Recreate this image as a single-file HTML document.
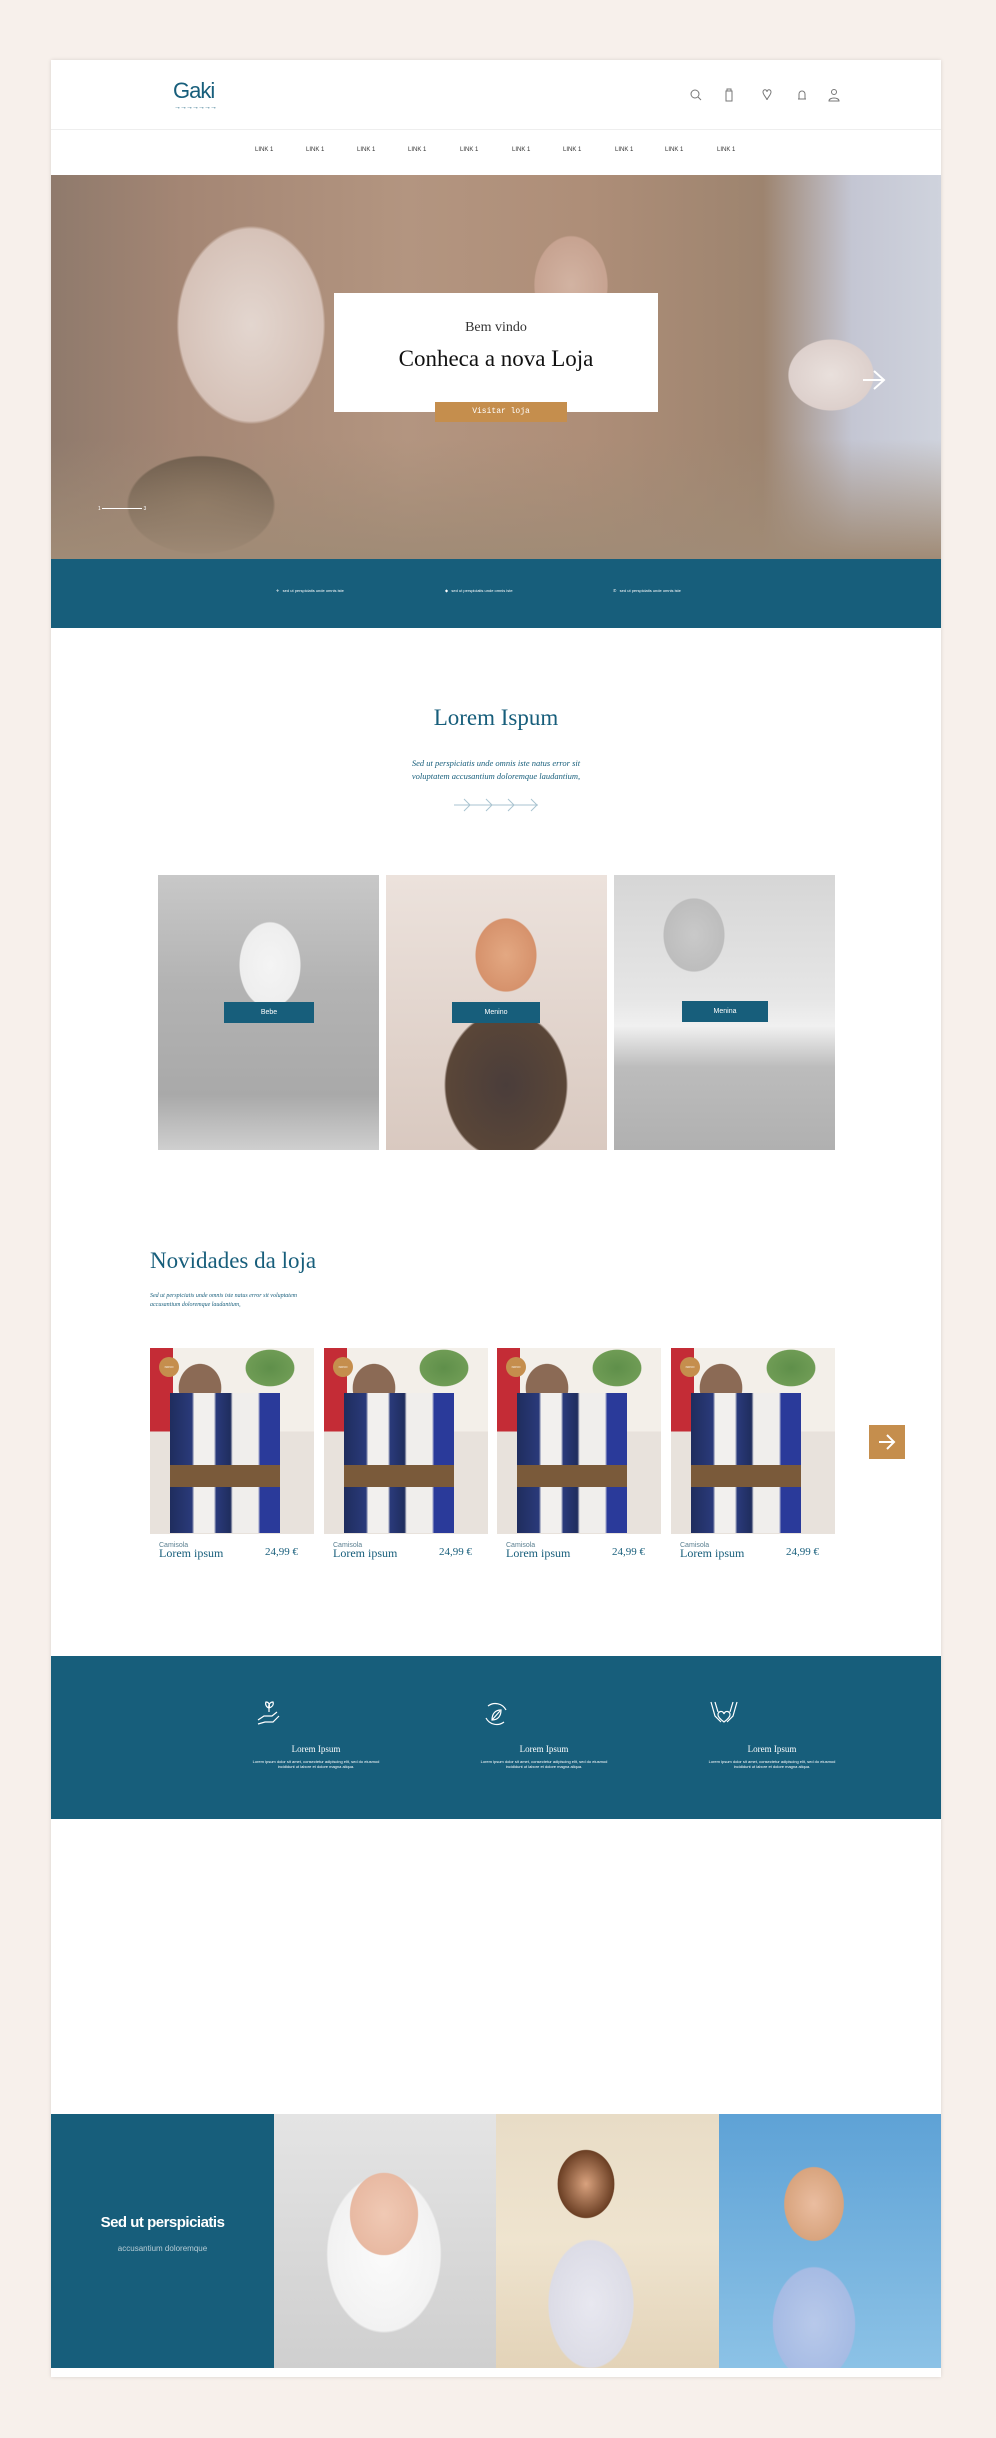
<!DOCTYPE html>
<html><head><meta charset="utf-8"><style>
*{margin:0;padding:0;box-sizing:border-box}
body{width:996px;height:2438px;background:#f7f0eb;font-family:"Liberation Sans",sans-serif;position:relative;overflow:hidden}
.card{position:absolute;left:51px;top:60px;width:890px;height:2317px;background:#fff;box-shadow:0 0 4px rgba(0,0,0,.12)}
.a{position:absolute}
.serif{font-family:"Liberation Serif",serif}
.blue{background:#175e7b}
.nav span{position:absolute;top:87px;font-size:6px;color:#333}
.hero{left:0;top:115px;width:890px;height:384px;background:
radial-gradient(ellipse 60px 80px at 520px 110px,#d2b3a2 0,#c7a391 60%,transparent 62%),
radial-gradient(ellipse 60px 50px at 780px 200px,#e9e0dc 0,#ddd0cc 70%,transparent 72%),
radial-gradient(ellipse 120px 160px at 200px 150px,#e3d6cf 0,#d6c2b8 60%,transparent 62%),
radial-gradient(ellipse 120px 80px at 150px 330px,#7e6a55 0,#6b5a4a 60%,transparent 62%),
linear-gradient(90deg,#8f7a6c 0,#a48674 15%,#b39580 40%,#ae8e78 60%,#9d846f 80%,#c4c6d3 90%,#cfd3dd 100%);}
.hero:after{content:"";position:absolute;left:0;right:0;bottom:0;height:120px;background:linear-gradient(180deg,transparent,#a08b76)}
.prod{position:absolute;top:1288px;width:164px;height:186px;background:
radial-gradient(ellipse 30px 34px at 50px 40px,#8b6a55 0,#8b6a55 70%,transparent 72%),
radial-gradient(ellipse 40px 30px at 120px 20px,#5f8f4a 0,#6f9c55 60%,transparent 62%),
linear-gradient(180deg,transparent 0,transparent 45%,#e8e2dc 45%),
linear-gradient(90deg,#c42c36 0,#c42c36 14%,#f3efe9 14%,#f3efe9 100%);}
.prod .k{position:absolute;left:20px;top:45px;width:110px;height:140px;background:linear-gradient(90deg,#1f2d5e 0,#2a3a7a 20%,#f2f0ee 22%,#f2f0ee 40%,#2a3a7a 42%,#1f2d5e 55%,#f0eeec 57%,#f0eeec 80%,#2a3a9a 82%)}
.prod .k:after{content:"";position:absolute;left:0;right:0;top:72px;height:22px;background:#7a5a3a}
.prod .b{position:absolute;left:9px;top:9px;width:20px;height:20px;border-radius:50%;background:#c58e4d;color:#fff;font-size:3px;text-align:center;line-height:20px}
.pt{position:absolute;top:1482px;font-size:7px;color:#5a7f90}
.pn{position:absolute;top:1486px;font-family:"Liberation Serif",serif;font-size:12px;color:#175e7b}
.f{position:absolute;top:1684px;width:180px;text-align:center;color:#fff}
.f b{display:block;font-family:"Liberation Serif",serif;font-weight:normal;font-size:9px;margin-bottom:5px}
.f p{font-size:4px;line-height:5px}
</style></head><body>
<div class="card">
 <div class="a" style="left:122px;top:18px;font-size:22px;color:#175e7b;letter-spacing:-1px">Gaki</div>
 <div class="a" style="left:123px;top:44px;font-size:7px;color:#175e7b;letter-spacing:-1px">→→→→→→→</div>
 <svg class="a" style="left:635px;top:27px" width="220" height="16" fill="none" stroke="#777" stroke-width="1">
  <circle cx="9" cy="7" r="4"/><path d="M12 10l3 3"/>
  <path d="M40 4h6v10h-6zM41 4v-2h4v2"/>
  <path d="M77 5c0-3 4-3 4 0c0-3 4-3 4 0c0 3-4 6-4 8c0-2-4-5-4-8z"/>
  <path d="M112 12h8M113 12v-5a3 3 0 0 1 6 0v5"/>
  <circle cx="148" cy="5" r="2.5"/><path d="M143 14c0-4 10-4 10 0z"/>
 </svg>
 <div class="a" style="left:0;top:69px;width:890px;height:1px;background:#eee"></div>
 <div class="nav">
  <span style="left:204px">LINK 1</span><span style="left:255px">LINK 1</span><span style="left:306px">LINK 1</span><span style="left:357px">LINK 1</span><span style="left:409px">LINK 1</span><span style="left:461px">LINK 1</span><span style="left:512px">LINK 1</span><span style="left:564px">LINK 1</span><span style="left:614px">LINK 1</span><span style="left:666px">LINK 1</span>
 </div>
 <div class="a hero"></div>
 <div class="a" style="left:47px;top:446px;font-size:5px;color:#fff">1 <span style="display:inline-block;width:40px;height:1px;background:#fff;vertical-align:middle"></span> 3</div>
 <svg class="a" style="left:810px;top:309px" width="26" height="22" fill="none" stroke="#fff" stroke-width="2"><path d="M2 11h21M13 2l10 9-10 9"/></svg>
 <div class="a" style="left:283px;top:233px;width:324px;height:119px;background:#fff;text-align:center">
  <div class="serif" style="margin-top:27px;font-size:14px;color:#333">Bem vindo</div>
  <div class="serif" style="margin-top:10px;font-size:23px;color:#111">Conheca a nova Loja</div>
 </div>
 <div class="a" style="left:384px;top:342px;width:132px;height:20px;background:#c58e4d;color:#fff;font-size:8px;text-align:center;line-height:20px;font-family:'Liberation Mono',monospace">Visitar loja</div>
 <div class="a blue" style="left:0;top:499px;width:890px;height:69px"></div>
 <div class="a" style="left:225px;top:528px;color:#fff;font-size:4px">✈&nbsp;&nbsp;&nbsp;sed ut perspiciatis unde omnis iste</div>
 <div class="a" style="left:394px;top:528px;color:#fff;font-size:4px">◆&nbsp;&nbsp;&nbsp;sed ut perspiciatis unde omnis iste</div>
 <div class="a" style="left:562px;top:528px;color:#fff;font-size:4px">✆&nbsp;&nbsp;&nbsp;sed ut perspiciatis unde omnis iste</div>
 <div class="a serif" style="left:0;width:890px;top:645px;text-align:center;font-size:23px;color:#175e7b">Lorem Ispum</div>
 <div class="a" style="left:0;width:890px;top:697px;text-align:center;font-size:8.5px;line-height:13px;color:#175e7b;font-style:italic;font-family:'Liberation Serif',serif">Sed ut perspiciatis unde omnis iste natus error sit<br>voluptatem accusantium doloremque laudantium,</div>
 <svg class="a" style="left:403px;top:738px" width="86" height="14" fill="none" stroke="#a9c3d0" stroke-width="1"><path d="M0 7h84M10 1l6 6-6 6M32 1l6 6-6 6M54 1l6 6-6 6M77 1l6 6-6 6"/></svg>
 <div class="a" style="left:107px;top:815px;width:221px;height:275px;background:radial-gradient(ellipse 50px 70px at 112px 90px,#f4f4f4 0,#eee 60%,transparent 62%),linear-gradient(180deg,#c8c8c8 0,#b3b3b3 40%,#a9a9a9 80%,#cfcfcf 100%)"></div>
 <div class="a" style="left:335px;top:815px;width:221px;height:275px;background:radial-gradient(ellipse 50px 60px at 120px 80px,#e3a882 0,#d6926c 60%,transparent 62%),radial-gradient(ellipse 100px 120px at 120px 210px,#4a3d3a 0,#5a4638 60%,transparent 62%),linear-gradient(180deg,#ece2dc,#d9c9c0)"></div>
 <div class="a" style="left:563px;top:815px;width:221px;height:275px;background:radial-gradient(ellipse 50px 60px at 80px 60px,#c9c9c9 0,#bdbdbd 60%,transparent 62%),linear-gradient(180deg,#d6d6d6 0,#e6e6e6 45%,#f0f0f0 55%,#bcbcbc 70%,#b0b0b0 100%)"></div>
 <div class="a blue" style="left:173px;top:942px;width:90px;height:21px;color:#fff;font-size:7px;text-align:center;line-height:21px">Bebe</div>
 <div class="a blue" style="left:401px;top:942px;width:88px;height:21px;color:#fff;font-size:7px;text-align:center;line-height:21px">Menino</div>
 <div class="a blue" style="left:631px;top:941px;width:86px;height:21px;color:#fff;font-size:7px;text-align:center;line-height:21px">Menina</div>
 <div class="a serif" style="left:99px;top:1188px;font-size:23px;color:#175e7b">Novidades da loja</div>
 <div class="a" style="left:99px;top:1232px;font-size:6px;line-height:9px;color:#175e7b;font-style:italic;font-family:'Liberation Serif',serif">Sed ut perspiciatis unde omnis iste natus error sit voluptatem<br>accusantium doloremque laudantium,</div>
 <div class="prod" style="left:99px"><div class="k"></div><div class="b">NOVO</div></div>
 <div class="prod" style="left:273px"><div class="k"></div><div class="b">NOVO</div></div>
 <div class="prod" style="left:446px"><div class="k"></div><div class="b">NOVO</div></div>
 <div class="prod" style="left:620px"><div class="k"></div><div class="b">NOVO</div></div>
 <div class="pt" style="left:108px">Camisola</div><div class="pt" style="left:282px">Camisola</div><div class="pt" style="left:455px">Camisola</div><div class="pt" style="left:629px">Camisola</div>
 <div class="pn" style="left:108px">Lorem ipsum</div><div class="pn" style="left:282px">Lorem ipsum</div><div class="pn" style="left:455px">Lorem ipsum</div><div class="pn" style="left:629px">Lorem ipsum</div>
 <div class="pn" style="left:214px;font-size:11px">24,99 €</div><div class="pn" style="left:388px;font-size:11px">24,99 €</div><div class="pn" style="left:561px;font-size:11px">24,99 €</div><div class="pn" style="left:735px;font-size:11px">24,99 €</div>
 <div class="a" style="left:818px;top:1365px;width:36px;height:34px;background:#c58e4d"></div>
 <svg class="a" style="left:827px;top:1374px" width="18" height="16" fill="none" stroke="#fff" stroke-width="2"><path d="M1 8h15M9 1l7 7-7 7"/></svg>
 <div class="a blue" style="left:0;top:1596px;width:890px;height:163px"></div>
 <svg class="a" style="left:204px;top:1640px" width="28" height="26" fill="none" stroke="#fff" stroke-width="1.2"><path d="M3 20l6-4h8l5-4M3 24l7-2h8l6-6M14 12V5M14 8c-3-1-4-4-3-6 3 0 4 3 3 6M14 8c3-1 5-3 4-6-3 0-5 3-4 6"/></svg>
 <svg class="a" style="left:431px;top:1640px" width="28" height="28" fill="none" stroke="#fff" stroke-width="1.2"><path d="M6 6a12 12 0 0 1 18 4M22 22a12 12 0 0 1-18-4"/><path d="M10 20c0-6 3-10 9-10 0 6-3 10-9 10zM10 20l8-9"/></svg>
 <svg class="a" style="left:657px;top:1640px" width="32" height="26" fill="none" stroke="#fff" stroke-width="1.2"><path d="M3 2l4 14 6 6M29 2l-4 14-6 6M7 2l3 10M25 2l-3 10M16 22c-4-3-6-5-6-7a3 3 0 0 1 6-1 3 3 0 0 1 6 1c0 2-2 4-6 7z"/></svg>
 <div class="f" style="left:175px"><b>Lorem Ipsum</b><p>Lorem ipsum dolor sit amet, consectetur adipiscing elit, sed do eiusmod<br>incididunt ut labore et dolore magna aliqua.</p></div>
 <div class="f" style="left:403px"><b>Lorem Ipsum</b><p>Lorem ipsum dolor sit amet, consectetur adipiscing elit, sed do eiusmod<br>incididunt ut labore et dolore magna aliqua.</p></div>
 <div class="f" style="left:631px"><b>Lorem Ipsum</b><p>Lorem ipsum dolor sit amet, consectetur adipiscing elit, sed do eiusmod<br>incididunt ut labore et dolore magna aliqua.</p></div>
 <div class="a blue" style="left:0;top:2054px;width:223px;height:254px;text-align:center;color:#fff">
  <div style="margin-top:100px;font-size:15px;font-weight:bold;letter-spacing:-.5px">Sed ut perspiciatis</div>
  <div style="margin-top:13px;font-size:8px;color:#b8cdd6">accusantium doloremque</div>
 </div>
 <div class="a" style="left:223px;top:2054px;width:222px;height:254px;background:radial-gradient(ellipse 48px 58px at 110px 100px,#f0c9b4 0,#e8b9a2 70%,transparent 72%),radial-gradient(ellipse 80px 110px at 110px 140px,#fbfbfb 0,#f2f2f2 70%,transparent 72%),linear-gradient(180deg,#e4e4e4,#cfcfcf)"></div>
 <div class="a" style="left:445px;top:2054px;width:223px;height:254px;background:radial-gradient(ellipse 40px 48px at 90px 70px,#d9a27e 0,#6b3f24 70%,transparent 72%),radial-gradient(ellipse 60px 90px at 95px 190px,#e8e8f0 0,#dcdce6 70%,transparent 72%),linear-gradient(180deg,#e8dcc6,#efe4cf 50%,#e3d3b8)"></div>
 <div class="a" style="left:668px;top:2054px;width:222px;height:254px;background:radial-gradient(ellipse 42px 52px at 95px 90px,#eabda0 0,#d8a47e 70%,transparent 72%),radial-gradient(ellipse 58px 80px at 95px 210px,#b8c9ea 0,#a6bbe4 70%,transparent 72%),linear-gradient(180deg,#5ea2d6,#8cc2e6)"></div>
</div>
</body></html>
